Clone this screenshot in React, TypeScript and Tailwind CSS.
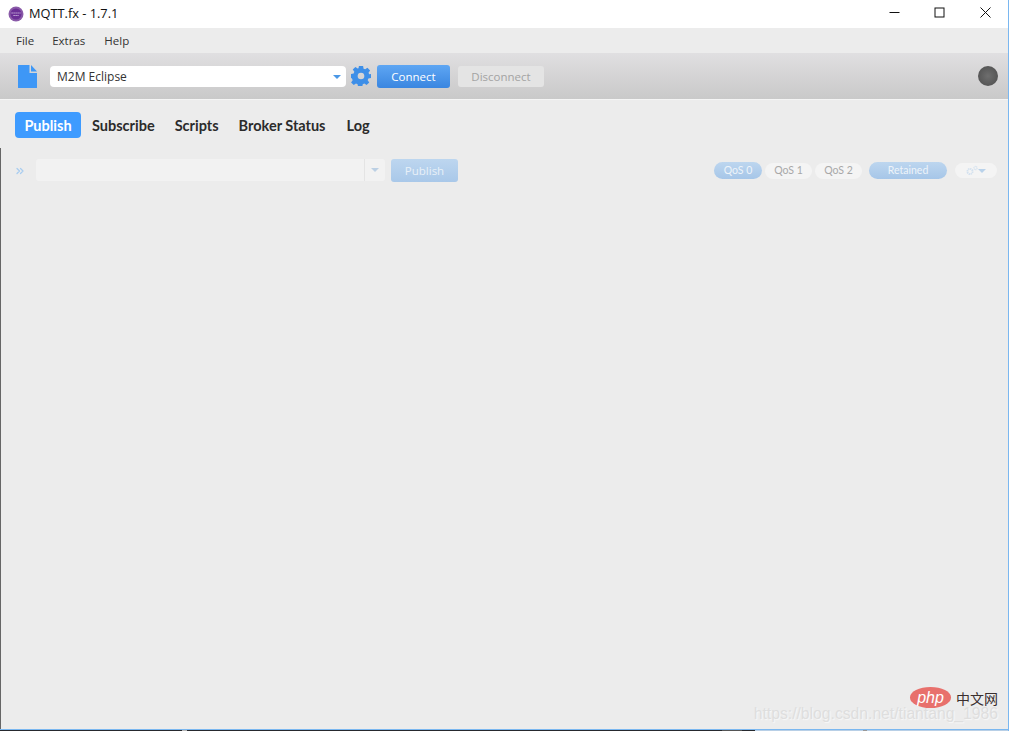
import { ChevronsRight } from 'lucide-react';

function QosPill({ label, active }: { label: string; active?: boolean }) {
    if (active) {
        return (
            <div className="flex h-[17px] w-[48px] items-center justify-center rounded-full bg-gradient-to-b from-[#bdd6ef] to-[#a6c6e8] text-[10.5px] text-[#eef4fa]">
                {label}
            </div>
        );
    }
    return (
        <div className="flex h-[16px] w-[47px] items-center justify-center rounded-full bg-[#f4f4f4] text-[10.5px] text-[#a8a8a8]">
            {label}
        </div>
    );
}

export default function App() {
    return (
        <div className="relative flex h-[731px] w-[1009px] flex-col overflow-hidden bg-[#ececec] font-['Lato',sans-serif]">
            {/* Title bar */}
            <div className="flex h-[28px] shrink-0 items-center bg-white pb-[1px] pl-[8px]">
                <svg width="16" height="16" viewBox="0 0 16 16">
                    <circle cx="8" cy="8" r="7.5" fill="#8a5aa8" />
                    <circle cx="8" cy="8" r="5.5" fill="#6b2f96" />
                    <path d="M3.5 7h9M5.5 9.5h5" stroke="#d8c6e6" strokeWidth="1.2" strokeDasharray="1.2 0.8" />
                </svg>
                <span className="ml-[5px] font-['Open_Sans',sans-serif] text-[12.8px] text-[#111]">MQTT.fx - 1.7.1</span>
                <div className="ml-auto flex items-center pb-[2px] pr-[18px]">
                    <svg width="11" height="11" viewBox="0 0 11 11" className="mr-[34px]">
                        <path d="M0.5 5.5h10" stroke="#111" strokeWidth="1" />
                    </svg>
                    <svg width="11" height="11" viewBox="0 0 11 11" className="mr-[35px]">
                        <rect x="1" y="1" width="9" height="9" fill="none" stroke="#111" strokeWidth="1" />
                    </svg>
                    <svg width="11" height="11" viewBox="0 0 11 11">
                        <path d="M0.5 0.5l10 10M10.5 0.5l-10 10" stroke="#111" strokeWidth="1" />
                    </svg>
                </div>
            </div>

            {/* Menu */}
            <div className="flex h-[25px] shrink-0 items-center pl-[16px] pt-[1px] font-['Open_Sans',sans-serif] text-[11.5px] text-[#333]">
                <span>File</span>
                <span className="ml-[18px]">Extras</span>
                <span className="ml-[19px]">Help</span>
            </div>

            {/* Toolbar */}
            <div className="flex h-[46px] shrink-0 items-center bg-gradient-to-b from-[#e0dfe1] to-[#c9c9c9] pl-[18px] pr-[11px]">
                <svg width="19" height="23" viewBox="0 0 19 23">
                    <path d="M0 0.5A.5.5 0 0 1 .5 0H11.5V8H19V22.5A.5.5 0 0 1 18.5 23H.5A.5.5 0 0 1 0 22.5Z" fill="#3e97f6" />
                    <path d="M13 0L19 6.5H13Z" fill="#3e97f6" />
                </svg>
                <div className="ml-[13px] flex h-[21px] w-[296px] items-center rounded-[4px] bg-white pl-[7px] pr-[5px] pt-[1px] font-['Open_Sans',sans-serif] text-[12px] text-[#333]">
                    <span>M2M Eclipse</span>
                    <span className="ml-auto h-0 w-0 border-x-[4px] border-t-[4px] border-x-transparent border-t-[#4a97e6]" />
                </div>
                <svg width="20" height="20" viewBox="0 0 24 24" className="ml-[5px]" fill="#3e8fe8">
                    <path fillRule="evenodd" d="M9.5 0h5l.6 3.2 1.900.8 2.700-1.900 3.200 3.200-1.900 2.700.8 1.900L24 9.500v5l-3.200.6-.8 1.900 1.900 2.700-3.200 3.200-2.700-1.900-1.900.8-.6 3.200h-5l-.6-3.200-1.900-.8-2.700 1.900-3.200-3.200 1.900-2.700-.8-1.900L0 14.500v-5l3.200-.6.8-1.900L2.100 4.300 5.300 1.100 8 3l1-.4zM12 8a4 4 0 1 0 0 8 4 4 0 0 0 0-8z" />
                </svg>
                <button className="ml-[6px] flex h-[23px] w-[73px] items-center justify-center rounded-[3px] bg-gradient-to-b from-[#5ea6f3] to-[#3a86e0] pt-[1px] font-['Open_Sans',sans-serif] text-[11.5px] text-white">
                    Connect
                </button>
                <button className="ml-[8px] flex h-[21px] w-[86px] items-center justify-center rounded-[3px] bg-[#e4e4e4] pt-[1px] font-['Open_Sans',sans-serif] text-[11.5px] text-[#a3a3a3]">
                    Disconnect
                </button>
                <div className="ml-auto h-[20px] w-[20px] rounded-full bg-[radial-gradient(circle,#6e6e6e,#4c4c4c)]" />
            </div>
            <div className="h-px shrink-0 bg-[#f5f5f5]" />

            {/* Tabs */}
            <div className="flex h-[48px] shrink-0 items-start pl-[15px] pt-[12px] text-[14.5px] font-bold leading-[28px] text-[#2b2b2b]">
                <div className="flex h-[26px] w-[66px] items-center justify-center rounded-[4px] bg-[#3e9bff] pt-[1px] text-white">Publish</div>
                <div className="ml-[11px]">Subscribe</div>
                <div className="ml-[20px]">Scripts</div>
                <div className="ml-[20px]">Broker Status</div>
                <div className="ml-[21px]">Log</div>
            </div>

            {/* Publish pane */}
            <div className="flex min-h-0 flex-1 border-l border-[#666]">
                <div className="flex h-[45px] w-full items-start pl-[13px] pr-[12px] pt-[11px]">
                    <ChevronsRight className="mt-[6px] h-[12px] w-[12px] text-[#a9cdf0]" strokeWidth={2.5} />
                    <div className="ml-[10px] flex h-[22px] w-[349px] items-center rounded-[3px] bg-[#f2f2f2]">
                        <div className="ml-auto flex h-full w-[21px] items-center justify-center border-l border-[#e4e4e4]">
                            <span className="h-0 w-0 border-x-[4px] border-t-[4px] border-x-transparent border-t-[#bcd0e4]" />
                        </div>
                    </div>
                    <button className="ml-[6px] flex h-[23px] w-[67px] items-center justify-center rounded-[3px] bg-gradient-to-b from-[#bdd6ef] to-[#a9c8e9] font-['Open_Sans',sans-serif] text-[11.5px] text-[#e8f0f8]">
                        Publish
                    </button>
                    <div className="ml-auto flex items-center pt-[3px]">
                        <QosPill label="QoS 0" active />
                        <div className="ml-[3px]"><QosPill label="QoS 1" /></div>
                        <div className="ml-[3px]"><QosPill label="QoS 2" /></div>
                        <div className="ml-[7px] flex h-[17px] w-[78px] items-center justify-center rounded-full bg-gradient-to-b from-[#bdd6ef] to-[#a6c6e8] text-[10.5px] text-[#eef4fa]">
                            Retained
                        </div>
                        <div className="ml-[8px] flex h-[15px] w-[42px] items-center justify-center rounded-full bg-[#f4f4f4]">
                            <svg width="12" height="11" viewBox="0 0 12 11">
                                <circle cx="4" cy="6.500" r="2.600" fill="none" stroke="#d3e1ef" strokeWidth="1.800" strokeDasharray="1.400 0.600" />
                                <circle cx="9.500" cy="3" r="1.600" fill="none" stroke="#d3e1ef" strokeWidth="1.200" strokeDasharray="1 0.500" />
                            </svg>
                            <span className="h-0 w-0 border-x-[4px] border-t-[4px] border-x-transparent border-t-[#b9d2ea]" />
                        </div>
                    </div>
                </div>
            </div>

            {/* Window edge */}
            <div className="h-px shrink-0 bg-[#7ab7f0]" />
            <div className="flex h-px shrink-0">
                <div className="w-[182px] bg-[#26292e]" />
                <div className="w-[5px] bg-[#b5b5b5]" />
                <div className="w-[535px] bg-[#26292e]" />
                <div className="w-[20px] bg-[#555]" />
                <div className="w-[13px] bg-[#26292e]" />
                <div className="w-[108px] bg-[#b8cfe6]" />
                <div className="w-[4px] bg-[#999]" />
                <div className="flex-1 bg-[#b8cfe6]" />
            </div>
            <div className="absolute right-0 top-0 h-full w-px bg-[#7ab7f0]" />

            {/* Watermark */}
            <div className="absolute right-[11px] top-[687px] flex items-start gap-[5px]">
                <div className="flex h-[21px] w-[41px] items-center justify-center rounded-[50%] bg-[#e8706c] font-['Liberation_Sans',sans-serif] text-[16px] italic leading-none text-white">
                    php
                </div>
                <span className="mt-[4px] font-['Noto_Sans_CJK_SC',sans-serif] text-[14px] leading-[14px] text-[#3a2f2f]">中文网</span>
            </div>
            <div className="absolute right-[11px] top-[706px] font-['Liberation_Sans',sans-serif] text-[15.7px] leading-none text-[#dedede] [text-shadow:1px_1px_1px_#f8f8f8]">
                https://blog.csdn.net/tiantang_1986
            </div>
        </div>
    );
}
